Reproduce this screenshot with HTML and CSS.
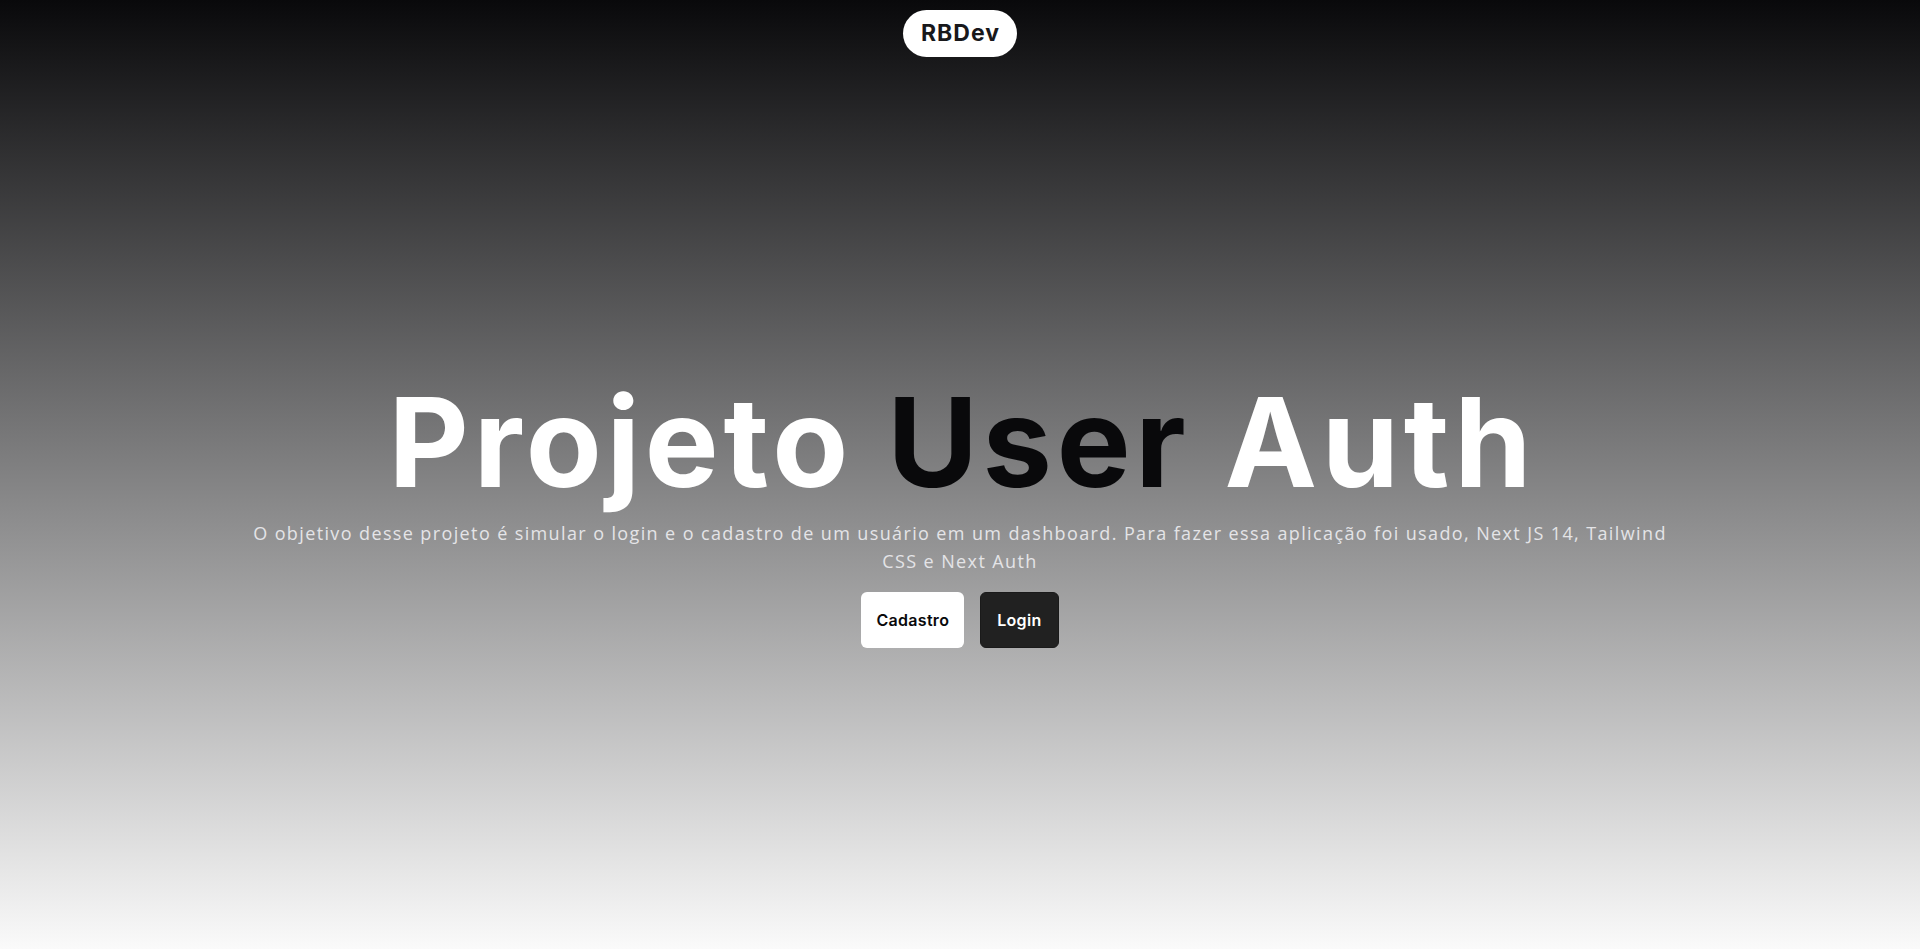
FILE: index.html
```html
<!DOCTYPE html>
<html lang="pt-BR">
<head>
<meta charset="utf-8">
<title>Projeto User Auth</title>
<link rel="stylesheet" href="styles.css">
</head>
<body>
<div class="page">
  <header class="topbar">
    <a class="brand" href="#">RBDev</a>
  </header>
  <main class="hero">
    <h1 class="title">Projeto <span class="accent">User</span> Auth</h1>
    <p class="lead">O objetivo desse projeto é simular o login e o cadastro de um usuário em um dashboard. Para fazer essa aplicação foi usado, Next JS 14, Tailwind CSS e Next Auth</p>
    <div class="actions">
      <a class="btn btn-light" href="#">Cadastro</a>
      <a class="btn btn-dark" href="#">Login</a>
    </div>
  </main>
</div>
</body>
</html>
```
FILE: styles.css
```css
* { box-sizing: border-box; }
html, body { margin: 0; padding: 0; }
body {
  font-family: "Open Sans", "Noto Sans", sans-serif;
  min-height: 100vh;
  background: linear-gradient(to bottom, #09090b 0%, #fafafa 100%);
}
.page {
  min-height: 100vh;
  display: flex;
  flex-direction: column;
}
.topbar {
  display: flex;
  justify-content: center;
  padding-top: 10px;
}
.brand {
  display: block;
  background: #ffffff;
  color: #18181b;
  text-decoration: none;
  border-radius: 9999px;
  font-family: "Inter", "Open Sans", sans-serif;
  font-weight: 700;
  font-size: 23px;
  line-height: 29px;
  letter-spacing: 1px;
  padding: 9px 17px 9px 18px;
}
.hero {
  display: flex;
  flex-direction: column;
  align-items: center;
  text-align: center;
  padding-top: 321px;
}
.title {
  margin: 0;
  font-family: "Inter", "Open Sans", sans-serif;
  font-weight: 700;
  font-size: 124px;
  line-height: 128px;
  letter-spacing: 4.7px;
  text-indent: 4.7px;
  color: #ffffff;
}
.accent { color: #09090b; }
.lead {
  margin: 13px 0 0;
  max-width: 1436px;
  font-size: 18px;
  font-weight: 500;
  line-height: 28px;
  color: #e4e4e7;
  letter-spacing: 1.38px;
}
.actions {
  display: flex;
  gap: 16px;
  margin-top: 17px;
}
.btn {
  display: block;
  font-family: "Inter", "Open Sans", sans-serif;
  font-weight: 600;
  font-size: 16px;
  line-height: 24px;
  letter-spacing: 0.3px;
  padding: 16px 15px;
  border-radius: 6px;
  text-decoration: none;
}
.btn-light { background: #ffffff; color: #09090b; }
.btn-dark { background: #212121; color: #ffffff; border: 1px solid #1a1a1a; padding: 15px 16px; }
```
